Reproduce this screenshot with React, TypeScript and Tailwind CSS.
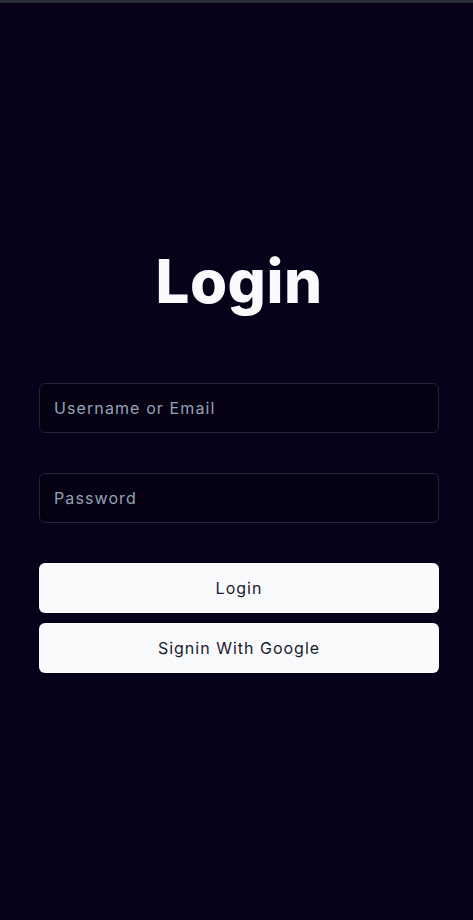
import React from "react";

export default function App() {
  return (
    <div
      className="min-h-[920px] w-full bg-[#070219] flex flex-col"
      style={{ fontFamily: "Inter, 'Open Sans', sans-serif" }}
    >
      <div className="h-[3px] w-full bg-[#2b2f33]" />
      <div className="ml-[39px] w-[400px] flex flex-col pt-[248px]">
        <h1 className="text-6xl leading-none font-extrabold text-[#f8fafc] text-center tracking-[0.5px]">
          Login
        </h1>
        <div className="mt-[72px] flex flex-col">
          <input
            type="text"
            placeholder="Username or Email"
            className="h-[50px] w-full rounded-md border border-[#1e2638] bg-[#050112] px-[14px] text-base text-[#e2e8f0] placeholder:text-[#94a3b8] outline-none tracking-[1.1px]"
          />
          <input
            type="password"
            placeholder="Password"
            className="mt-10 h-[50px] w-full rounded-md border border-[#1e2638] bg-[#050112] px-[14px] text-base text-[#e2e8f0] placeholder:text-[#94a3b8] outline-none tracking-[1.1px]"
          />
          <button className="mt-10 h-[50px] w-full rounded-md bg-[#f8fafc] text-base font-normal text-[#1c1a2e] tracking-[1px]">
            Login
          </button>
          <button className="mt-[10px] h-[50px] w-full rounded-md bg-[#f8fafc] text-base font-normal text-[#1c1a2e] tracking-[1px]">
            Signin With Google
          </button>
        </div>
      </div>
    </div>
  );
}
